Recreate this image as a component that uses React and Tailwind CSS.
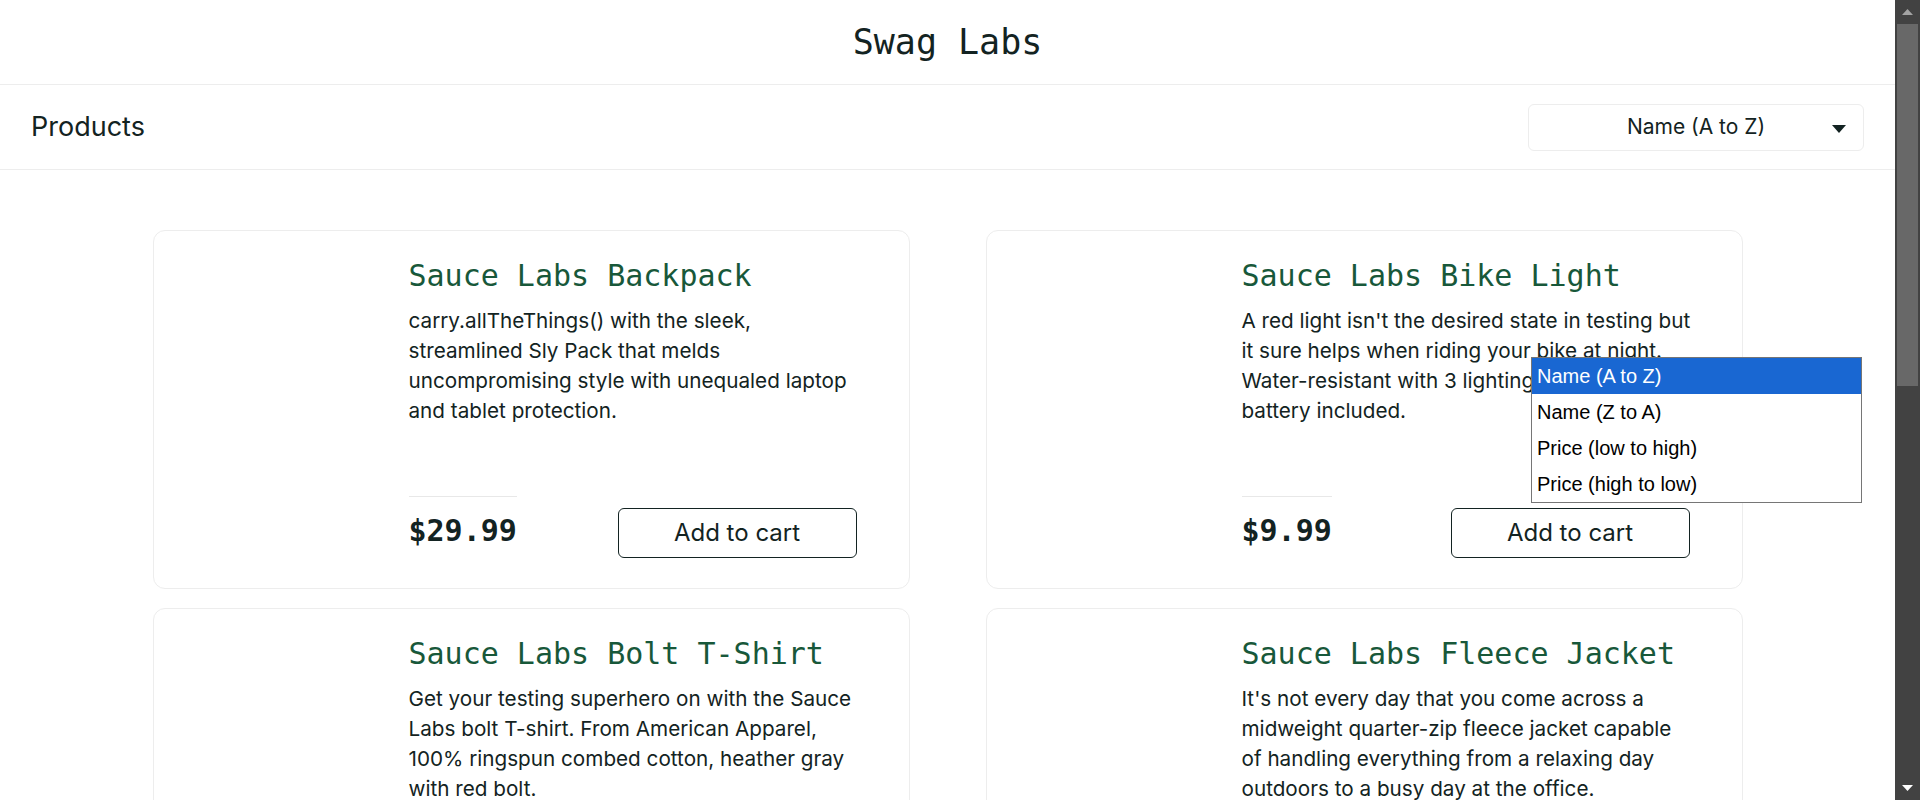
import React from "react";

const products = [
  {
    name: "Sauce Labs Backpack",
    lines: [
      "carry.allTheThings() with the sleek,",
      "streamlined Sly Pack that melds",
      "uncompromising style with unequaled laptop",
      "and tablet protection.",
    ],
    price: "$29.99",
  },
  {
    name: "Sauce Labs Bike Light",
    lines: [
      "A red light isn't the desired state in testing but",
      "it sure helps when riding your bike at night.",
      "Water-resistant with 3 lighting modes, 1 AAA",
      "battery included.",
    ],
    price: "$9.99",
  },
  {
    name: "Sauce Labs Bolt T-Shirt",
    lines: [
      "Get your testing superhero on with the Sauce",
      "Labs bolt T-shirt. From American Apparel,",
      "100% ringspun combed cotton, heather gray",
      "with red bolt.",
    ],
    price: "$15.99",
  },
  {
    name: "Sauce Labs Fleece Jacket",
    lines: [
      "It's not every day that you come across a",
      "midweight quarter-zip fleece jacket capable",
      "of handling everything from a relaxing day",
      "outdoors to a busy day at the office.",
    ],
    price: "$49.99",
  },
];

const sortOptions = ["Name (A to Z)", "Name (Z to A)", "Price (low to high)", "Price (high to low)"];

function ProductCard({ item }) {
  return (
    <div className="w-[757px] h-[359px] border border-[#ededed] rounded-[12px] bg-white flex pl-[30px] pr-[52px] py-[30px]">
      <div className="w-[225px] shrink-0" />
      <div className="w-[448px] flex flex-col justify-between">
        <div>
          <div className="font-['DejaVu_Sans_Mono',monospace] text-[30px] leading-[30px] text-[#18583a] whitespace-nowrap">
            {item.name}
          </div>
          <div className="mt-[15px] font-['Inter',sans-serif] text-[20.7px] leading-[30px] text-[#132322] whitespace-nowrap">
            {item.lines.map((l) => (
              <div key={l}>{l}</div>
            ))}
          </div>
        </div>
        <div className="flex items-end justify-between">
          <div className="border-t border-[#e8e8e8] pt-[19px] pb-[12px] font-['DejaVu_Sans_Mono',monospace] font-bold text-[30px] leading-[30px] text-[#132322]">
            {item.price}
          </div>
          <button className="w-[239px] h-[50px] border border-[#132322] rounded-[6px] bg-white font-['Inter',sans-serif] text-[24px] text-[#132322]">
            Add to cart
          </button>
        </div>
      </div>
    </div>
  );
}

function SortSelect() {
  return (
    <div className="relative w-[336px] h-[47px] border border-[#ededed] rounded-[6px] bg-white flex items-center justify-center">
      <span className="font-['Inter',sans-serif] text-[21px] text-[#132322]">Name (A to Z)</span>
      <svg className="absolute right-[17px] top-[20px]" width="14" height="8" viewBox="0 0 14 8">
        <path d="M0 0 L14 0 L7 8 Z" fill="#132322" />
      </svg>
      <div className="absolute left-[2px] top-[252px] w-[331px] border border-[#767676] bg-white z-10">
        {sortOptions.map((o, i) => (
          <div
            key={o}
            className={`h-[36px] flex items-center pl-[5px] font-['Liberation_Sans',Arial,sans-serif] text-[20px] ${
              i === 0 ? "bg-[#1967d2] text-white" : "text-black"
            }`}
          >
            {o}
          </div>
        ))}
      </div>
    </div>
  );
}

function Scrollbar() {
  return (
    <div className="w-[25px] h-[800px] bg-[#424242] flex flex-col items-center shrink-0">
      <div className="h-[24px] flex items-center justify-center">
        <svg width="11" height="6" viewBox="0 0 11 6">
          <path d="M0 6 L5.5 0 L11 6 Z" fill="#a3a3a3" />
        </svg>
      </div>
      <div className="w-[21px] h-[362px] bg-[#686868]" />
      <div className="flex-1" />
      <div className="h-[24px] flex items-center justify-center">
        <svg width="11" height="6" viewBox="0 0 11 6">
          <path d="M0 0 L5.5 6 L11 0 Z" fill="#ffffff" />
        </svg>
      </div>
    </div>
  );
}

export default function App() {
  return (
    <div className="w-[1920px] h-[800px] overflow-hidden flex bg-white">
      <div className="flex-1 flex flex-col overflow-hidden">
        <header className="h-[85px] shrink-0 border-b border-[#ededed] flex items-center justify-center">
          <div className="font-['DejaVu_Sans_Mono',monospace] text-[35px] text-[#132322]">Swag Labs</div>
        </header>
        <div className="h-[85px] shrink-0 border-b border-[#ededed] flex items-center justify-between px-[31px]">
          <div className="font-['Inter',sans-serif] text-[27px] text-[#132322]">Products</div>
          <SortSelect />
        </div>
        <div className="flex-1 pt-[60px] flex justify-center">
          <div className="grid grid-cols-[757px_757px] gap-x-[76px] gap-y-[19px] content-start">
            {products.map((p) => (
              <ProductCard key={p.name} item={p} />
            ))}
          </div>
        </div>
      </div>
      <Scrollbar />
    </div>
  );
}
